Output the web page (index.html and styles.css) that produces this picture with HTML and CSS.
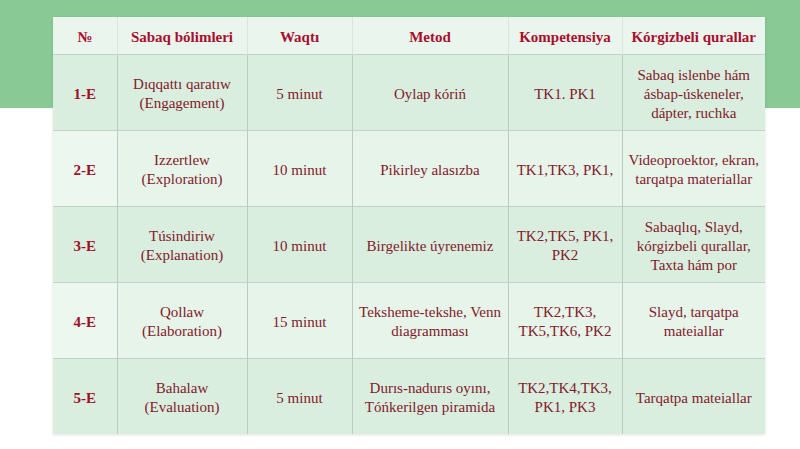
FILE: index.html
```html
<!DOCTYPE html>
<html>
<head>
<meta charset="utf-8">
<link rel="stylesheet" href="styles.css">
</head>
<body>
<div class="slide">
  <div class="band"></div>
  <div class="wrap">
    <table class="plan">
      <colgroup>
        <col class="c1"><col class="c2"><col class="c3"><col class="c4"><col class="c5"><col class="c6">
      </colgroup>
      <thead>
        <tr><th>№</th><th>Sabaq bólimleri</th><th>Waqtı</th><th>Metod</th><th>Kompetensiya</th><th>Kórgizbeli qurallar</th></tr>
      </thead>
      <tbody>
        <tr class="dark"><td class="num">1-E</td><td>Dıqqattı qaratıw<br>(Engagement)</td><td>5 minut</td><td>Oylap kóriń</td><td>TK1. PK1</td><td>Sabaq islenbe hám<br>ásbap-úskeneler,<br>dápter, ruchka</td></tr>
        <tr class="light"><td class="num">2-E</td><td>Izzertlew<br>(Exploration)</td><td>10 minut</td><td>Pikirley alasızba</td><td>TK1,TK3, PK1,</td><td>Videoproektor, ekran,<br>tarqatpa materiallar</td></tr>
        <tr class="dark"><td class="num">3-E</td><td>Túsindiriw<br>(Explanation)</td><td>10 minut</td><td>Birgelikte úyrenemiz</td><td>TK2,TK5, PK1,<br>PK2</td><td>Sabaqlıq, Slayd,<br>kórgizbeli qurallar,<br>Taxta hám por</td></tr>
        <tr class="light"><td class="num">4-E</td><td>Qollaw<br>(Elaboration)</td><td>15 minut</td><td>Teksheme-tekshe, Venn<br>diagramması</td><td>TK2,TK3,<br>TK5,TK6, PK2</td><td>Slayd, tarqatpa<br>mateiallar</td></tr>
        <tr class="dark"><td class="num">5-E</td><td>Bahalaw<br>(Evaluation)</td><td>5 minut</td><td>Durıs-nadurıs oyını,<br>Tóńkerilgen piramida</td><td>TK2,TK4,TK3,<br>PK1, PK3</td><td>Tarqatpa mateiallar</td></tr>
      </tbody>
    </table>
  </div>
</div>
</body>
</html>
```

FILE: styles.css
```css
html, body {
  margin: 0;
  padding: 0;
  background: #ffffff;
}
.slide {
  width: 800px;
  height: 449px;
  position: relative;
  overflow: hidden;
  background: #ffffff;
}
.band {
  height: 108px;
  background: #88c995;
}
.wrap {
  position: absolute;
  left: 53px;
  top: 17px;
}
.plan {
  width: 712px;
  border-collapse: collapse;
  table-layout: fixed;
  font-family: "Liberation Serif", "Times New Roman", serif;
  font-size: 15px;
  line-height: 19px;
  color: #821a2a;
  box-shadow: 0 1px 3px rgba(0,0,0,0.12);
}
.c1 { width: 64px; }
.c2 { width: 130px; }
.c3 { width: 105px; }
.c4 { width: 156px; }
.c5 { width: 114px; }
.c6 { width: 143px; }
.plan th, .plan td {
  text-align: center;
  vertical-align: middle;
  padding: 3px 1px 0;
  border-left: 1px solid #bccbc0;
  border-top: 1px solid #c2d3c6;
}
.plan th:first-child, .plan td:first-child { border-left: none; }
.plan th {
  height: 34px;
  font-weight: bold;
  color: #a80f2e;
  background: #eaf5ed;
  border-top: none;
  border-left-color: #d8e6dc;
}
.plan td { height: 72px; }
.plan tr.dark td { background: #d9eedf; }
.plan tr.light td { background: #e7f4ea; }
.plan tr.light td.num { background: #ecf7ef; }
.plan td.num { font-weight: bold; color: #9a1128; }
```
